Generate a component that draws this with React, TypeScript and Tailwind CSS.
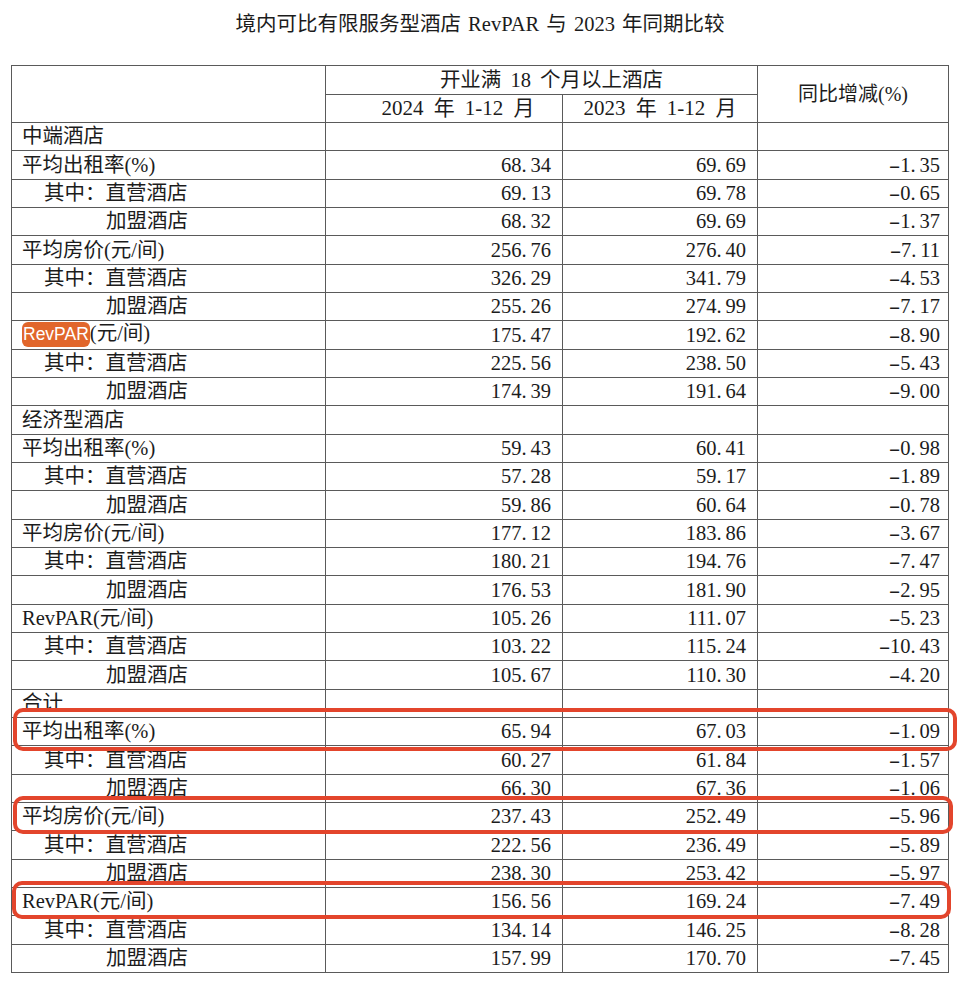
import React from "react";

type Row = {
  label: string;
  kind: "section" | "main" | "sub1" | "sub2";
  v?: [string, string, string];
  mark?: boolean;
};

const rows: Row[] = [
  { label: "中端酒店", kind: "section" },
  { label: "平均出租率(%)", kind: "main", v: ["68.34", "69.69", "-1.35"] },
  { label: "其中：直营酒店", kind: "sub1", v: ["69.13", "69.78", "-0.65"] },
  { label: "加盟酒店", kind: "sub2", v: ["68.32", "69.69", "-1.37"] },
  { label: "平均房价(元/间)", kind: "main", v: ["256.76", "276.40", "-7.11"] },
  { label: "其中：直营酒店", kind: "sub1", v: ["326.29", "341.79", "-4.53"] },
  { label: "加盟酒店", kind: "sub2", v: ["255.26", "274.99", "-7.17"] },
  { label: "RevPAR(元/间)", kind: "main", v: ["175.47", "192.62", "-8.90"], mark: true },
  { label: "其中：直营酒店", kind: "sub1", v: ["225.56", "238.50", "-5.43"] },
  { label: "加盟酒店", kind: "sub2", v: ["174.39", "191.64", "-9.00"] },
  { label: "经济型酒店", kind: "section" },
  { label: "平均出租率(%)", kind: "main", v: ["59.43", "60.41", "-0.98"] },
  { label: "其中：直营酒店", kind: "sub1", v: ["57.28", "59.17", "-1.89"] },
  { label: "加盟酒店", kind: "sub2", v: ["59.86", "60.64", "-0.78"] },
  { label: "平均房价(元/间)", kind: "main", v: ["177.12", "183.86", "-3.67"] },
  { label: "其中：直营酒店", kind: "sub1", v: ["180.21", "194.76", "-7.47"] },
  { label: "加盟酒店", kind: "sub2", v: ["176.53", "181.90", "-2.95"] },
  { label: "RevPAR(元/间)", kind: "main", v: ["105.26", "111.07", "-5.23"] },
  { label: "其中：直营酒店", kind: "sub1", v: ["103.22", "115.24", "-10.43"] },
  { label: "加盟酒店", kind: "sub2", v: ["105.67", "110.30", "-4.20"] },
  { label: "合计", kind: "section" },
  { label: "平均出租率(%)", kind: "main", v: ["65.94", "67.03", "-1.09"] },
  { label: "其中：直营酒店", kind: "sub1", v: ["60.27", "61.84", "-1.57"] },
  { label: "加盟酒店", kind: "sub2", v: ["66.30", "67.36", "-1.06"] },
  { label: "平均房价(元/间)", kind: "main", v: ["237.43", "252.49", "-5.96"] },
  { label: "其中：直营酒店", kind: "sub1", v: ["222.56", "236.49", "-5.89"] },
  { label: "加盟酒店", kind: "sub2", v: ["238.30", "253.42", "-5.97"] },
  { label: "RevPAR(元/间)", kind: "main", v: ["156.56", "169.24", "-7.49"] },
  { label: "其中：直营酒店", kind: "sub1", v: ["134.14", "146.25", "-8.28"] },
  { label: "加盟酒店", kind: "sub2", v: ["157.99", "170.70", "-7.45"] },
];

// SimSun-style spacing: wide minus, gap after the decimal point
function Num({ value }: { value: string }) {
  const neg = value.startsWith("-");
  const [int, frac] = (neg ? value.slice(1) : value).split(".");
  return (
    <>
      {neg && <span className="inline-block w-[11px] scale-x-[1.7] text-center">-</span>}
      {int}.<span className="pl-[4px]">{frac}</span>
    </>
  );
}

function Label({ row }: { row: Row }) {
  const pad =
    row.kind === "sub1" ? "pl-[32px]" : row.kind === "sub2" ? "pl-[94px]" : "pl-[10px]";
  if (row.mark) {
    return (
      <div className={pad}>
        <span className="inline-block rounded-[6px] bg-[#e1662b] px-[1px] font-['Liberation_Sans',sans-serif] text-[17.5px] leading-[25px] text-white">
          RevPAR
        </span>
        (元/间)
      </div>
    );
  }
  return <div className={pad}>{row.label}</div>;
}

export default function App() {
  const cell = "border border-[#5a5a5a] p-0";
  const num = "text-[20.5px]";
  return (
    <div className="relative h-[988px] w-[960px] overflow-hidden bg-white font-['Liberation_Serif','Noto_Sans_CJK_SC',serif] text-[#1c1c1c]">
      <h1 className="pt-[9px] text-center text-[20.5px] leading-[30px] [word-spacing:2px]">
        境内可比有限服务型酒店 RevPAR 与 2023 年同期比较
      </h1>

      <table className="ml-[11px] mt-[26px] w-[937px] table-fixed border-collapse text-[20.5px] leading-none">
        <colgroup>
          <col className="w-[314px]" />
          <col className="w-[237px]" />
          <col className="w-[195px]" />
          <col className="w-[191px]" />
        </colgroup>
        <thead>
          <tr className="h-[29px]">
            <th rowSpan={2} className={cell}></th>
            <th colSpan={2} className={`${cell} pl-[20px] text-center font-normal [word-spacing:4px]`}>
              开业满 18 个月以上酒店
            </th>
            <th rowSpan={2} className={`${cell} text-[20px] text-center font-normal`}>
              同比增减(%)
            </th>
          </tr>
          <tr className="h-[28px]">
            <th className={`${cell} pl-[28px] text-center text-[21px] font-normal [word-spacing:5px]`}>
              2024 年 1-12 月
            </th>
            <th className={`${cell} text-center text-[21px] font-normal [word-spacing:5px]`}>
              2023 年 1-12 月
            </th>
          </tr>
        </thead>
        <tbody>
          {rows.map((r, i) => (
            <tr key={i} className="h-[28.33px]">
              <td className={cell}>
                <Label row={r} />
              </td>
              <td className={`${cell} ${num} pr-[11px] text-right`}>{r.v && <Num value={r.v[0]} />}</td>
              <td className={`${cell} ${num} pr-[11px] text-right`}>{r.v && <Num value={r.v[1]} />}</td>
              <td className={`${cell} ${num} pr-[8px] text-right`}>{r.v && <Num value={r.v[2]} />}</td>
            </tr>
          ))}
        </tbody>
      </table>

      {/* red annotation boxes drawn over the scan */}
      <div className="absolute left-[13px] top-[708px] h-[43px] w-[944px] rounded-[10px] border-[4px] border-[#e3452c]" />
      <div className="absolute left-[13px] top-[796px] h-[38px] w-[940px] rounded-[10px] border-[4px] border-[#e3452c]" />
      <div className="absolute left-[12px] top-[881px] h-[38px] w-[939px] rounded-[10px] border-[4px] border-[#e3452c]" />
    </div>
  );
}
